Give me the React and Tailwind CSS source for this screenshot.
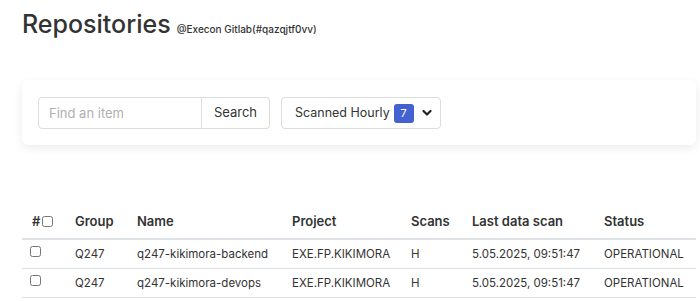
import React from "react";

const rows = [
  { group: "Q247", name: "q247-kikimora-backend", project: "EXE.FP.KIKIMORA", scans: "H", last: "5.05.2025, 09:51:47", status: "OPERATIONAL" },
  { group: "Q247", name: "q247-kikimora-devops", project: "EXE.FP.KIKIMORA", scans: "H", last: "5.05.2025, 09:51:47", status: "OPERATIONAL" },
];

const App = () => {
  return (
    <div className="min-h-screen bg-white text-[#333] pl-[22px]" style={{ fontFamily: "Inter, 'Noto Sans', sans-serif" }}>
      <div className="w-[674px]">
        <div className="flex items-baseline gap-[6px] pt-[9px]">
          <h1 className="text-[25px] leading-[30px] font-medium text-[#333]">Repositories</h1>
          <span className="text-[10px] font-medium text-[#333]">@Execon Gitlab(#qazqjtf0vv)</span>
        </div>

        <div className="mt-[41px] bg-white rounded-[6px] shadow-[0_3px_10px_rgba(0,0,0,0.08)] px-[16px] pt-[17px] pb-[16px] flex items-center gap-[11px]">
          <div className="flex">
            <input
              type="text"
              placeholder="Find an item"
              className="w-[164px] h-[32px] border border-[#dcdcdc] rounded-l-[4px] px-[10px] text-[13px] text-[#333] placeholder:text-[#b0b0b0] outline-none"
            />
            <button className="h-[32px] w-[68px] border border-l-0 border-[#dcdcdc] rounded-r-[4px] text-[13px] text-[#333] bg-white">
              Search
            </button>
          </div>
          <button className="h-[32px] w-[160px] border border-[#dcdcdc] rounded-[4px] pl-[13px] pr-[10px] flex items-center text-[12.5px] text-[#333] bg-white whitespace-nowrap">
            <span>Scanned Hourly</span>
            <span className="ml-[4px] shrink-0 w-[20px] h-[19px] rounded-[3px] bg-[#4461d0] text-white text-[11px] flex items-center justify-center">7</span>
            <svg className="ml-[8px] shrink-0" width="10" height="10" viewBox="0 0 10 10" fill="none">
              <path d="M1.5 3 L5 6.5 L8.5 3" stroke="#222" strokeWidth="2.2" strokeLinecap="round" strokeLinejoin="round" />
            </svg>
          </button>
        </div>

        <table className="mt-[59px] w-full table-fixed border-collapse text-[11.5px] text-[#333]">
          <colgroup>
            <col className="w-[43px]" />
            <col className="w-[62px]" />
            <col className="w-[155px]" />
            <col className="w-[119px]" />
            <col className="w-[61px]" />
            <col className="w-[132px]" />
            <col />
          </colgroup>
          <thead>
            <tr className="border-b-2 border-[#dee2e6] text-[13px]">
              <th className="text-left pl-[10px] py-[9px] leading-[16px] font-semibold whitespace-nowrap">
                <span className="inline-flex items-center gap-[2px]">
                  #<input type="checkbox" className="w-[11px] h-[11px]" />
                </span>
              </th>
              <th className="text-left pl-[10px] py-[9px] leading-[16px] font-semibold">Group</th>
              <th className="text-left pl-[10px] py-[9px] leading-[16px] font-semibold">Name</th>
              <th className="text-left pl-[10px] py-[9px] leading-[16px] font-semibold">Project</th>
              <th className="text-left pl-[10px] py-[9px] leading-[16px] font-semibold">Scans</th>
              <th className="text-left pl-[10px] py-[9px] leading-[16px] font-semibold">Last data scan</th>
              <th className="text-left pl-[10px] py-[9px] leading-[16px] font-semibold">Status</th>
            </tr>
          </thead>
          <tbody>
            {rows.map((row, i) => (
              <tr key={i} className="border-b border-[#dee2e6]">
                <td className="pl-[8px] py-[6px] leading-[16px]">
                  <input type="checkbox" className="w-[11px] h-[11px] align-[1px]" />
                </td>
                <td className="pl-[10px] py-[6px] leading-[16px] whitespace-nowrap">{row.group}</td>
                <td className="pl-[10px] py-[6px] leading-[16px] whitespace-nowrap">{row.name}</td>
                <td className="pl-[10px] py-[6px] leading-[16px] whitespace-nowrap">{row.project}</td>
                <td className="pl-[10px] py-[6px] leading-[16px] whitespace-nowrap">{row.scans}</td>
                <td className="pl-[10px] py-[6px] leading-[16px] whitespace-nowrap">{row.last}</td>
                <td className="pl-[10px] py-[6px] leading-[16px] whitespace-nowrap">{row.status}</td>
              </tr>
            ))}
          </tbody>
        </table>
      </div>
    </div>
  );
};

export default App;
